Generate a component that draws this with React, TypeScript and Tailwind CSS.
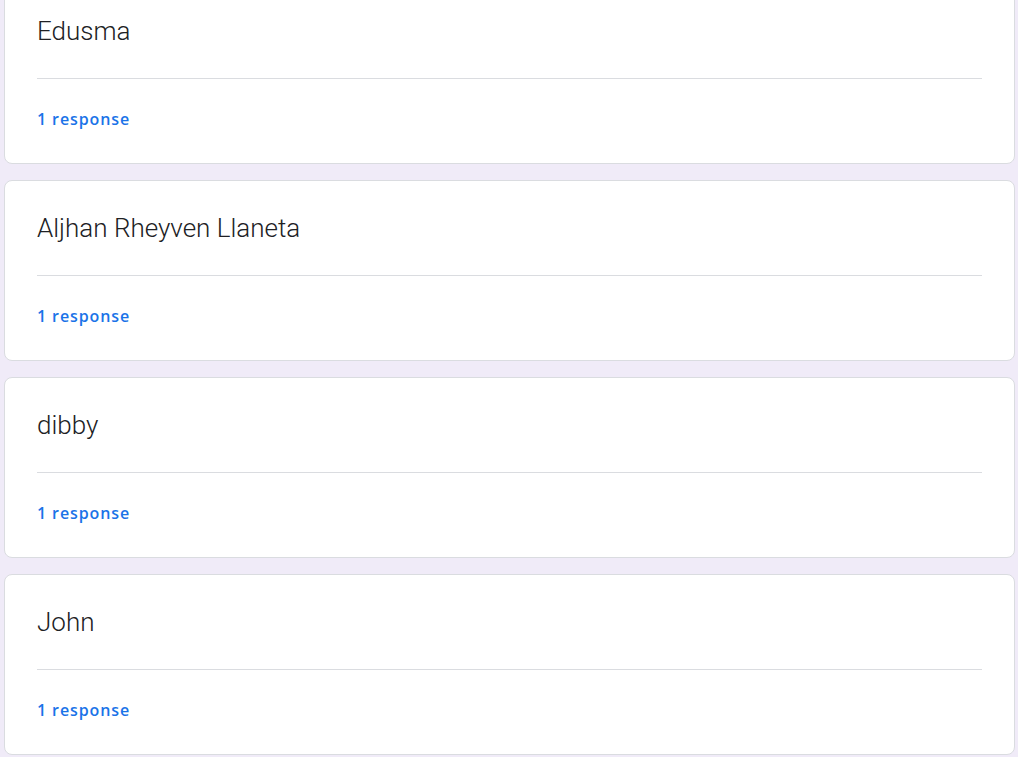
const names = ["Edusma", "Aljhan Rheyven Llaneta", "dibby", "John"];

function ResponseCard({ name }: { name: string }) {
  return (
    <div className="h-[181px] rounded-lg border border-[#dadce0] bg-white px-8 pt-[31px]">
      <div className="text-[26px] leading-8 font-light text-[#202124] font-['Roboto',sans-serif]">
        {name}
      </div>
      <div className="mt-[31px] h-px bg-[#dadce0]" />
      <div className="pt-[30px] text-[16px] leading-5 font-semibold tracking-[0.9px] text-[#1a73e8] font-['Open_Sans',sans-serif]">
        1 response
      </div>
    </div>
  );
}

export default function App() {
  return (
    <div className="h-[757px] overflow-hidden bg-[#f0ebf8]">
      <div className="-mt-[17px] flex flex-col gap-4 pl-1 pr-[3px]">
        {names.map((n) => (
          <ResponseCard key={n} name={n} />
        ))}
      </div>
    </div>
  );
}
